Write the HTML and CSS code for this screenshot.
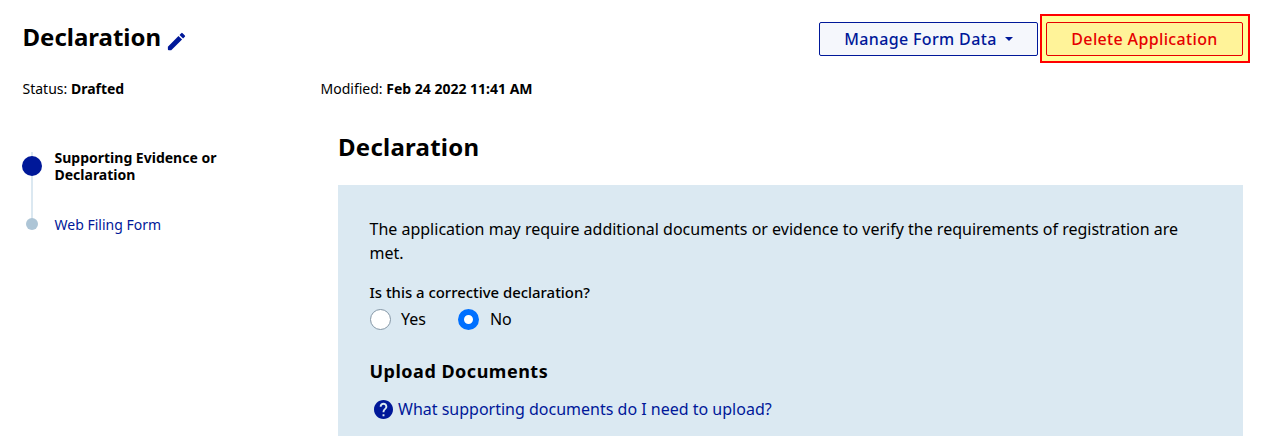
FILE: index.html
```
<!DOCTYPE html>
<html lang="en">
<head>
  <meta charset="UTF-8" />
  <meta name="viewport" content="width=device-width, initial-scale=1.0"/>
  <title>Declaration</title>
  <link rel="stylesheet" href="styles.css">
</head>
<body>
  <header>
    <div class="title">
      <h1>Declaration</h1>
      <a href="#" class="edit-link" aria-label="Edit name">
        <svg viewBox="0 0 24 24" width="23" height="23"><path d="M3 17.5V20q0 1 1 1h2.5L17.81 9.94l-3.75-3.75L3 17.5zM20.71 7.04a1 1 0 0 0 0-1.41l-2.34-2.34a1 1 0 0 0-1.41 0l-1.83 1.83 3.75 3.75 1.83-1.83z"/></svg>
      </a>
    </div>
    <div class="actions">
      <button type="button" class="btn btn-manage">Manage Form Data<span class="caret"></span></button>
      <div class="highlight">
        <button type="button" class="btn btn-delete">Delete Application</button>
      </div>
    </div>
  </header>

  <div class="info">
    <div class="info-item">Status: <b>Drafted</b></div>
    <div class="info-item">Modified: <b>Feb 24 2022 11:41 AM</b></div>
  </div>

  <div class="content">
    <ul class="steps">
      <li class="step active">
        <div class="track"><span class="dot"></span></div>
        <span class="step-name">Supporting Evidence or Declaration</span>
      </li>
      <li class="step">
        <div class="track"><span class="dot"></span></div>
        <a href="#" class="step-name">Web Filing Form</a>
      </li>
    </ul>

    <main>
      <h2>Declaration</h2>
      <div class="panel">
        <p class="intro">The application may require additional documents or evidence to verify the requirements of registration are met.</p>

        <div class="question">Is this a corrective declaration?</div>
        <div class="radio-row">
          <label><input type="radio" name="corrective" value="yes"> Yes</label>
          <label><input type="radio" name="corrective" value="no" checked> No</label>
        </div>

        <h3>Upload Documents</h3>
        <a href="#" class="help-link">
          <svg viewBox="2 2 20 20" width="19" height="19"><path d="M12 2C6.48 2 2 6.48 2 12s4.48 10 10 10 10-4.48 10-10S17.52 2 12 2zm1 17h-2v-2h2v2zm2.07-7.75-.9.92C13.45 12.9 13 13.5 13 15h-2v-.5c0-1.1.45-2.1 1.17-2.83l1.24-1.26c.37-.36.59-.86.59-1.41 0-1.1-.9-2-2-2s-2 .9-2 2H8c0-2.21 1.79-4 4-4s4 1.79 4 4c0 .88-.36 1.68-.93 2.25z"/></svg>
          <span>What supporting documents do I need to upload?</span>
        </a>
      </div>
    </main>
  </div>
</body>
</html>
```
FILE: styles.css
```
* {
  margin: 0;
  padding: 0;
  box-sizing: border-box;
}

body {
  height: 436px;
  overflow: hidden;
  background: #fff;
  color: #000;
  font-family: "Noto Sans", sans-serif;
  font-size: 16px;
}

a {
  color: #001899;
  text-decoration: none;
}

svg {
  display: block;
  fill: #001899;
}

header {
  display: flex;
  justify-content: space-between;
  height: 80px;
  padding: 14px 20px 0 22.5px;
}

.title {
  display: flex;
}

h1, h2 {
  font-size: 24px;
  font-weight: 700;
  line-height: 32px;
}

h1 {
  padding-top: 7px;
}

.edit-link {
  padding: 16px 0 0 4px;
}

.actions {
  display: flex;
  align-items: flex-start;
  gap: 2px;
}

.btn {
  height: 34px;
  border: 1px solid #001899;
  border-radius: 2px;
  font-family: inherit;
  font-size: 16px;
  font-weight: 500;
  letter-spacing: 0.35px;
  white-space: nowrap;
}

.btn-manage {
  display: flex;
  align-items: center;
  justify-content: center;
  width: 219px;
  margin-top: 8px;
  background: #f5f7fc;
  color: #001899;
}

.caret {
  margin-left: 8px;
  border-top: 4px solid #001899;
  border-left: 4px solid transparent;
  border-right: 4px solid transparent;
}

.highlight {
  height: 49px;
  padding: 6px 5px 0 4px;
  border: 2px solid #ff0000;
  background: #ffff99;
}

.btn-delete {
  width: 197px;
  border-color: #e60000;
  background: #fff399;
  color: #e60000;
}

.info {
  display: flex;
  padding-left: 22.5px;
  font-size: 14px;
  line-height: 18px;
}

.info-item {
  width: 298px;
}

.info b {
  font-weight: 700;
}

.content {
  display: flex;
  padding: 33px 27px 0 22px;
}

.steps {
  width: 316px;
  padding-top: 18px;
  list-style: none;
}

.step {
  display: flex;
  gap: 12.5px;
  height: 67px;
  font-size: 14px;
  line-height: 17px;
}

.track {
  display: flex;
  flex-direction: column;
  align-items: center;
  width: 20px;
  padding-top: 2px;
  background: linear-gradient(#dbe8f1, #dbe8f1) 9px 0 / 2px 4px no-repeat;
}

.step.active .track {
  padding-top: 7px;
  background-position: 9px 3px;
  background-size: 2px 64px;
}

.dot {
  width: 12px;
  height: 12px;
  border-radius: 50%;
  background: #adc5d6;
}

.active .dot {
  width: 20px;
  height: 20px;
  background: #001899;
}

.step-name {
  width: 190px;
}

.active .step-name {
  font-weight: 700;
}

main {
  width: 905px;
}

h2 {
  margin-bottom: 22px;
  letter-spacing: 0.25px;
}

.panel {
  height: 270px;
  padding: 32px 32px 32px 31.5px;
  background: #dbe9f2;
}

.intro {
  line-height: 24px;
}

.question {
  margin-top: 17px;
  font-size: 14.9px;
  font-weight: 500;
  line-height: 20px;
}

.radio-row {
  display: flex;
  gap: 32.5px;
  margin-top: 5px;
}

.radio-row label {
  display: flex;
  align-items: center;
  gap: 10.5px;
  line-height: 24px;
}

.radio-row input {
  appearance: none;
  width: 21px;
  height: 21px;
  border: 1px solid #8496a5;
  border-radius: 50%;
  background: #fff;
}

.radio-row input:checked {
  border: 6px solid #0070ff;
}

h3 {
  margin-top: 27px;
  font-size: 18px;
  font-weight: 700;
  letter-spacing: 0.5px;
  line-height: 26px;
}

.help-link {
  display: flex;
  align-items: center;
  gap: 5.5px;
  margin-top: 12px;
  padding-left: 4px;
  line-height: 26px;
}
```
